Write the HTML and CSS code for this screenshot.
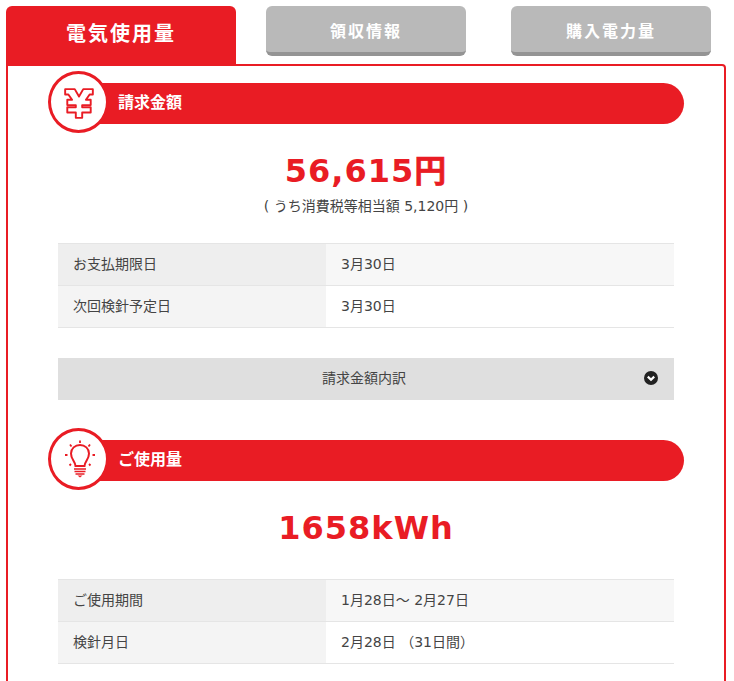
FILE: index.html
```html
<!DOCTYPE html>
<html lang="ja">
<head>
  <meta charset="UTF-8" />
  <meta name="viewport" content="width=device-width, initial-scale=1.0" />
  <title>電気使用量</title>
  <link rel="stylesheet" href="styles.css">
</head>
<body>

  <div class="wrapper">
    <!-- Tabs -->
    <div class="tabs">
      <div class="tab active">電気使用量</div>
      <div class="tab second">領収情報</div>
      <div class="tab third">購入電力量</div>
    </div>

    <div class="panel">
      <!-- Billing -->
      <div class="section-head">
        <div class="circle">
          <svg class="yen-icon" width="32" height="33" viewBox="0 0 30 31">
            <path d="M2 2H11L15 9L19 2H28V7H25L21.500 12H26V17H18V19H26V24H18V29H12V24H4V19H12V17H4V12H8.500L5 7H2Z" fill="#fff" stroke="#e91c24" stroke-width="1.800" stroke-linejoin="round"/>
          </svg>
        </div>
        <div class="bar">請求金額</div>
      </div>
      <div class="amount">56,615<span class="yen">円</span></div>
      <div class="tax">( うち消費税等相当額 5,120円 )</div>

      <div class="info">
        <div class="row">
          <div class="label">お支払期限日</div>
          <div class="value">3月30日</div>
        </div>
        <div class="row">
          <div class="label">次回検針予定日</div>
          <div class="value">3月30日</div>
        </div>
      </div>

      <div class="detail">
        請求金額内訳
        <svg class="chevron" width="14" height="14" viewBox="0 0 14 14">
          <circle cx="7" cy="7" r="7" fill="#222"/>
          <path d="M3.800 5.600L7 8.800L10.200 5.600" fill="none" stroke="#fff" stroke-width="2.200"/>
        </svg>
      </div>

      <!-- Usage -->
      <div class="section-head usage-head">
        <div class="circle">
          <svg width="36" height="40" viewBox="0 0 36 40">
            <g fill="none" stroke="#e91c24">
              <path d="M14.500 27C14 22 10 20.500 10 14.500C10 9.500 14 6 19 6C24 6 28 9.500 28 14.500C28 20.500 24 22 23.500 27Z" stroke-width="2"/>
              <path d="M13 30H25M13.500 32.500H24.500M14.500 35H23.500" stroke-width="1.600"/>
              <path d="M19 1.500V4M9 5.500L10.500 7.500M29 5.500L27.500 7.500M4 16H6.500M34 16H31.500M8.500 26.500L10 25M29.500 26.500L28 25" stroke-width="1.800"/>
            </g>
            <path d="M16.500 36.500H21.500L19 38.500Z" fill="#e91c24"/>
          </svg>
        </div>
        <div class="bar">ご使用量</div>
      </div>
      <div class="amount usage">1658kWh</div>

      <div class="info usage-info">
        <div class="row">
          <div class="label">ご使用期間</div>
          <div class="value">1月28日～ 2月27日</div>
        </div>
        <div class="row">
          <div class="label">検針月日</div>
          <div class="value">2月28日 （31日間）</div>
        </div>
      </div>
    </div>
  </div>

</body>
</html>
```

FILE: styles.css
```css
* {
  box-sizing: border-box;
  margin: 0;
  padding: 0;
}

html {
  height: 100%;
  overflow: hidden;
}

body {
  background: #fff;
  color: #444;
  font-family: "DejaVu Sans", "Noto Sans CJK JP", sans-serif;
  font-size: 14px;
}

.wrapper {
  width: 720px;
  margin: 6px 0 0 6px;
}

.tabs {
  display: flex;
  align-items: flex-start;
  height: 58px;
}

.tab {
  width: 200px;
  height: 50px;
  background: #b9b9b9;
  border-bottom: 4px solid #949494;
  border-radius: 6px;
  color: #fff;
  font-size: 16px;
  font-weight: bold;
  letter-spacing: 2px;
  line-height: 52px;
  text-align: center;
}

.tab.active {
  width: 230px;
  height: 58px;
  background: #e91c24;
  border-bottom: none;
  border-radius: 6px 6px 0 0;
  font-size: 20px;
  line-height: 56px;
}

.tab.second {
  margin-left: 30px;
}

.tab.third {
  margin-left: 45px;
}

.panel {
  height: 700px;
  padding: 17px 40px 0 50px;
  border: 2px solid #e91c24;
  border-radius: 0 4px 0 0;
}

.section-head {
  position: relative;
}

.bar {
  height: 41px;
  padding-left: 60px;
  background: #e91c24;
  border-radius: 0 21px 21px 0;
  color: #fff;
  font-size: 16px;
  font-weight: bold;
  line-height: 40px;
}

.circle {
  position: absolute;
  left: -10px;
  top: -12px;
  display: flex;
  align-items: center;
  justify-content: center;
  width: 61px;
  height: 62px;
  background: #fff;
  border: 3px solid #e91c24;
  border-radius: 50%;
}

.yen-icon {
  margin-top: 2px;
}

.amount {
  margin: 26px 10px 0 0;
  color: #e91c24;
  font-size: 32px;
  font-weight: bold;
  letter-spacing: 1px;
  line-height: 42px;
  text-align: center;
}

.yen {
  -webkit-text-stroke: 0.6px #e91c24;
}

.tax {
  margin: 4px 10px 0 0;
  line-height: 20px;
  text-align: center;
}

.info {
  margin: 27px 10px 0 0;
  border-top: 1px solid #e5e5e5;
}

.row {
  display: flex;
  height: 42px;
  border-bottom: 1px solid #e5e5e5;
  line-height: 41px;
}

.label {
  width: 268px;
  padding-left: 15px;
  background: #eee;
}

.value {
  flex: 1;
  padding-left: 15px;
  background: #f7f7f7;
}

.row + .row .label {
  background: #f4f4f4;
}

.row + .row .value {
  background: #fff;
}

.detail {
  position: relative;
  height: 42px;
  margin: 30px 10px 0 0;
  padding-right: 4px;
  background: #dfdfdf;
  line-height: 40px;
  text-align: center;
}

.chevron {
  position: absolute;
  right: 16px;
  top: 13px;
}

.usage-head {
  margin-top: 40px;
}

.amount.usage {
  margin-top: 26px;
}

.usage-info {
  margin-top: 30px;
}
```
